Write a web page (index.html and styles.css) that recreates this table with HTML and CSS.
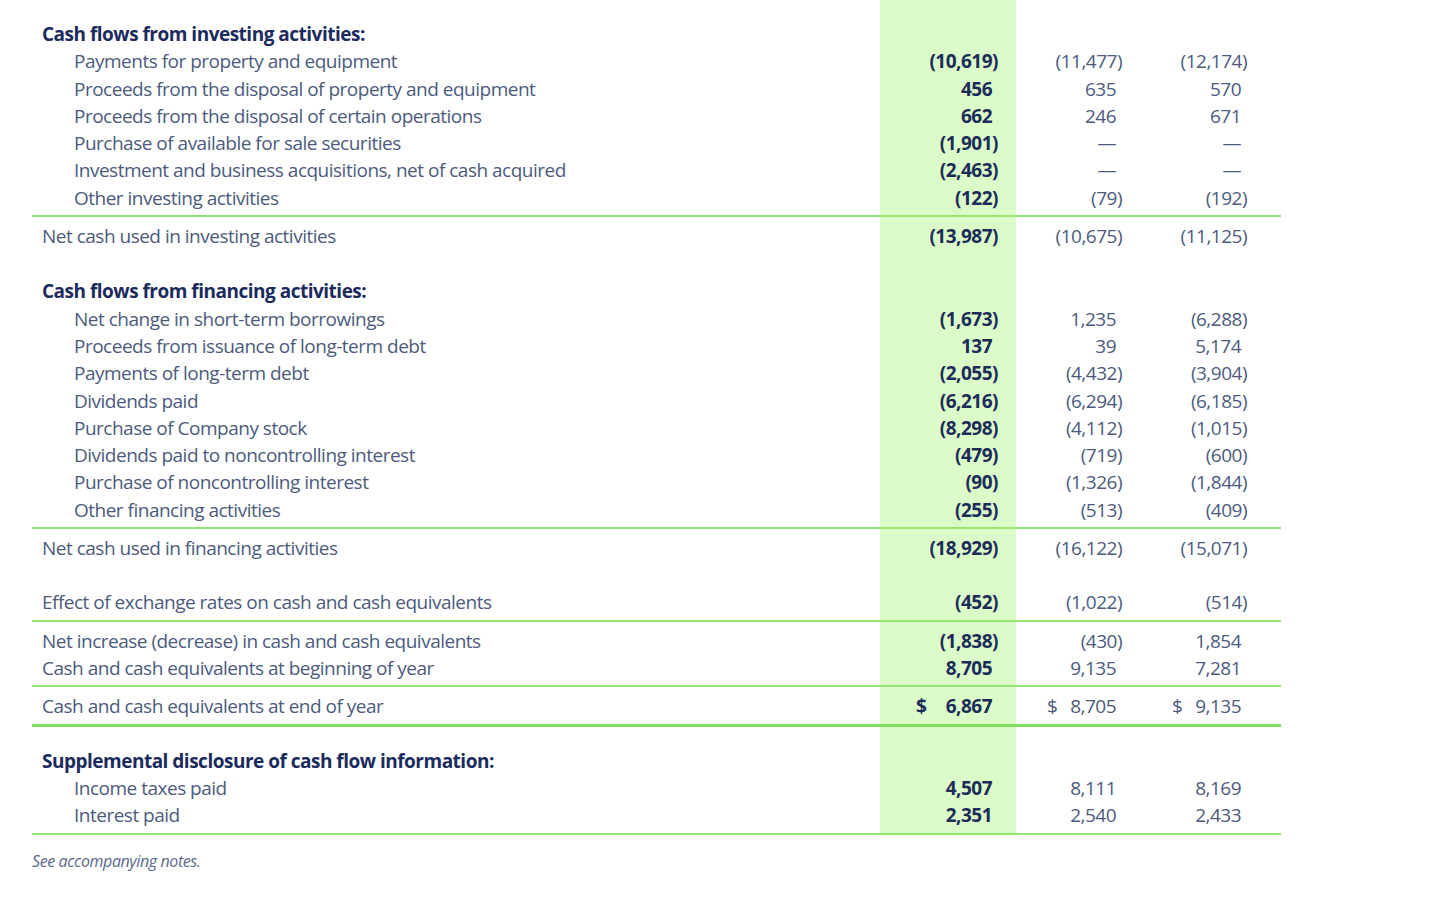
FILE: index.html
```html
<!DOCTYPE html>
<html lang="en">
<head>
<meta charset="utf-8">
<title>Cash flows</title>
<link rel="stylesheet" href="styles.css">
</head>
<body>
<table class="cf">
  <colgroup>
    <col class="c-label"><col class="c-cur"><col class="c-p1"><col class="c-p2"><col class="c-end">
  </colgroup>
  <tbody>
    <tr class="spacer"><td></td><td class="cur"></td><td></td><td></td><td></td></tr>

    <tr class="head"><td class="lbl">Cash flows from investing activities:</td><td class="cur"></td><td></td><td></td><td></td></tr>
    <tr class="item"><td class="lbl">Payments for property and equipment</td><td class="num cur">(10,619)</td><td class="num">(11,477)</td><td class="num">(12,174)</td><td></td></tr>
    <tr class="item"><td class="lbl">Proceeds from the disposal of property and equipment</td><td class="num cur"><span class="p">456</span></td><td class="num"><span class="p">635</span></td><td class="num"><span class="p">570</span></td><td></td></tr>
    <tr class="item"><td class="lbl">Proceeds from the disposal of certain operations</td><td class="num cur"><span class="p">662</span></td><td class="num"><span class="p">246</span></td><td class="num"><span class="p">671</span></td><td></td></tr>
    <tr class="item"><td class="lbl">Purchase of available for sale securities</td><td class="num cur">(1,901)</td><td class="num"><span class="p">—</span></td><td class="num"><span class="p">—</span></td><td></td></tr>
    <tr class="item"><td class="lbl">Investment and business acquisitions, net of cash acquired</td><td class="num cur">(2,463)</td><td class="num"><span class="p">—</span></td><td class="num"><span class="p">—</span></td><td></td></tr>
    <tr class="item last"><td class="lbl">Other investing activities</td><td class="num cur">(122)</td><td class="num">(79)</td><td class="num">(192)</td><td></td></tr>
    <tr class="total"><td class="lbl">Net cash used in investing activities</td><td class="num cur">(13,987)</td><td class="num">(10,675)</td><td class="num">(11,125)</td><td></td></tr>

    <tr class="gap"><td></td><td class="cur"></td><td></td><td></td><td></td></tr>

    <tr class="head"><td class="lbl">Cash flows from financing activities:</td><td class="cur"></td><td></td><td></td><td></td></tr>
    <tr class="item"><td class="lbl">Net change in short-term borrowings</td><td class="num cur">(1,673)</td><td class="num"><span class="p">1,235</span></td><td class="num">(6,288)</td><td></td></tr>
    <tr class="item"><td class="lbl">Proceeds from issuance of long-term debt</td><td class="num cur"><span class="p">137</span></td><td class="num"><span class="p">39</span></td><td class="num"><span class="p">5,174</span></td><td></td></tr>
    <tr class="item"><td class="lbl">Payments of long-term debt</td><td class="num cur">(2,055)</td><td class="num">(4,432)</td><td class="num">(3,904)</td><td></td></tr>
    <tr class="item"><td class="lbl">Dividends paid</td><td class="num cur">(6,216)</td><td class="num">(6,294)</td><td class="num">(6,185)</td><td></td></tr>
    <tr class="item"><td class="lbl">Purchase of Company stock</td><td class="num cur">(8,298)</td><td class="num">(4,112)</td><td class="num">(1,015)</td><td></td></tr>
    <tr class="item"><td class="lbl">Dividends paid to noncontrolling interest</td><td class="num cur">(479)</td><td class="num">(719)</td><td class="num">(600)</td><td></td></tr>
    <tr class="item"><td class="lbl">Purchase of noncontrolling interest</td><td class="num cur">(90)</td><td class="num">(1,326)</td><td class="num">(1,844)</td><td></td></tr>
    <tr class="item last"><td class="lbl">Other financing activities</td><td class="num cur">(255)</td><td class="num">(513)</td><td class="num">(409)</td><td></td></tr>
    <tr class="total"><td class="lbl">Net cash used in financing activities</td><td class="num cur">(18,929)</td><td class="num">(16,122)</td><td class="num">(15,071)</td><td></td></tr>

    <tr class="gap gap2"><td></td><td class="cur"></td><td></td><td></td><td></td></tr>

    <tr class="plain last"><td class="lbl">Effect of exchange rates on cash and cash equivalents</td><td class="num cur">(452)</td><td class="num">(1,022)</td><td class="num">(514)</td><td></td></tr>
    <tr class="total"><td class="lbl">Net increase (decrease) in cash and cash equivalents</td><td class="num cur">(1,838)</td><td class="num">(430)</td><td class="num"><span class="p">1,854</span></td><td></td></tr>
    <tr class="plain last"><td class="lbl">Cash and cash equivalents at beginning of year</td><td class="num cur"><span class="p">8,705</span></td><td class="num"><span class="p">9,135</span></td><td class="num"><span class="p">7,281</span></td><td></td></tr>
    <tr class="total grand"><td class="lbl">Cash and cash equivalents at end of year</td><td class="num cur"><div class="dol"><span>$</span><span class="p">6,867</span></div></td><td class="num"><div class="dol"><span>$</span><span class="p">8,705</span></div></td><td class="num"><div class="dol"><span>$</span><span class="p">9,135</span></div></td><td></td></tr>

    <tr class="head supp"><td class="lbl">Supplemental disclosure of cash flow information:</td><td class="cur"></td><td></td><td></td><td></td></tr>
    <tr class="item"><td class="lbl">Income taxes paid</td><td class="num cur"><span class="p">4,507</span></td><td class="num"><span class="p">8,111</span></td><td class="num"><span class="p">8,169</span></td><td></td></tr>
    <tr class="item last final"><td class="lbl">Interest paid</td><td class="num cur"><span class="p">2,351</span></td><td class="num"><span class="p">2,540</span></td><td class="num"><span class="p">2,433</span></td><td></td></tr>
  </tbody>
</table>
<p class="note">See accompanying notes.</p>
</body>
</html>
```

FILE: styles.css
```css
html, body {
  margin: 0;
  padding: 0;
  background: #ffffff;
}

body {
  font-family: "Open Sans", "Noto Sans", "Liberation Sans", sans-serif;
  font-size: 19px;
  letter-spacing: -0.5px;
  color: #4c5b7d;
}

.cf {
  border-collapse: collapse;
  table-layout: fixed;
  width: 1249px;
  margin-left: 32px;
}

.c-label { width: 848px; }
.c-cur { width: 136px; }
.c-p1 { width: 125px; }
.c-p2 { width: 125px; }
.c-end { width: 15px; }

.cf td {
  padding: 2px 0 0 0;
  line-height: 25.3px;
  white-space: nowrap;
  vertical-align: middle;
}

.cf td.cur {
  background: #dbfcc8;
}

.spacer td { height: 20px; padding: 0; }
.gap td { height: 28px; padding: 0; }
.gap2 td { height: 27px; padding: 0; }

.lbl {
  padding-left: 10px !important;
}

.item .lbl {
  padding-left: 42px !important;
}

.head .lbl {
  font-weight: 700;
  color: #1b2b5d;
}

.num {
  text-align: right;
  padding-right: 19px !important;
}

.num.cur {
  padding-right: 18px !important;
  font-weight: 700;
  color: #1c2c59;
}

.p {
  padding-right: 6px;
}

.last td { padding-bottom: 4px; }

.total { border-top: 2px solid #93e674; }
.total td { padding-top: 7px; }

.grand { border-bottom: 3px solid #7fde5c; }
.grand td { padding-bottom: 4px; }

.supp td { padding-top: 22px; }

.final { border-bottom: 2px solid #93e674; }
.final td { padding-bottom: 5px; }

.dol {
  display: flex;
  justify-content: space-between;
  padding-left: 31px;
}

.cur .dol {
  padding-left: 36px;
}

.note {
  margin: 15px 0 0 32px;
  font-size: 16px;
  font-style: italic;
  letter-spacing: -0.4px;
  color: #5b6a8a;
  line-height: 22px;
}
```
